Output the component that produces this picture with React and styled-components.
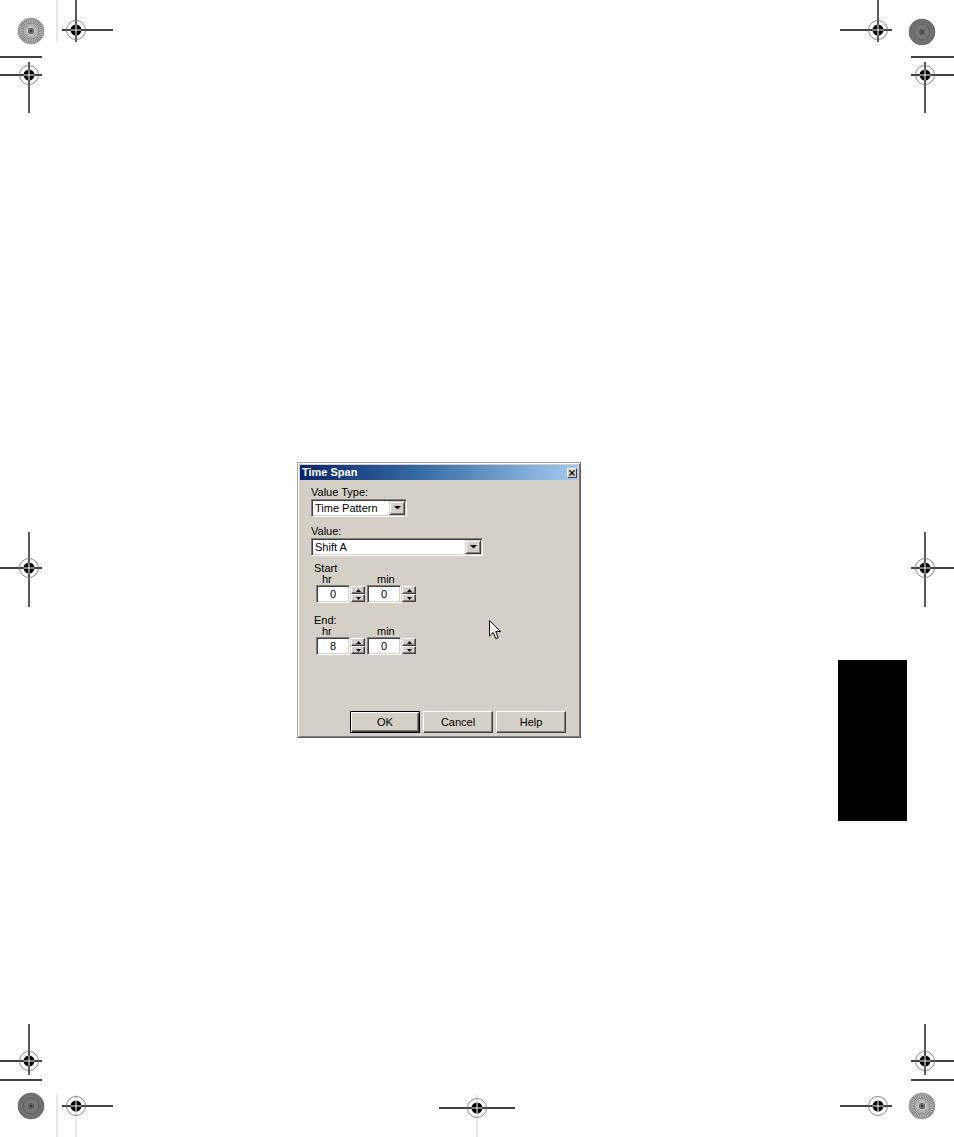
import React from 'react';
import styled, { createGlobalStyle } from 'styled-components';

const Global = createGlobalStyle`
  html, body { margin: 0; padding: 0; background: #fff; }
  body { font-family: "Liberation Sans", Arial, sans-serif; }
`;

const Page = styled.div`
  position: relative;
  width: 954px;
  height: 1137px;
  box-sizing: border-box;
  padding: 462px 0 0 297px;
  overflow: hidden;
  background: #fff;
`;

const Marks = styled.svg`
  position: absolute;
  left: 0;
  top: 0;
  pointer-events: none;
`;

const ThumbTab = styled.div`
  position: absolute;
  left: 838px;
  top: 660px;
  width: 69px;
  height: 161px;
  background: #000;
`;

const Window = styled.div`
  position: relative;
  width: 284px;
  height: 276px;
  box-sizing: border-box;
  display: flex;
  flex-direction: column;
  padding: 2px;
  background: #d4d0c8;
  border: 1px solid;
  border-color: #a8a49c #5a5a5a #5a5a5a #a8a49c;
  box-shadow: inset 1px 1px 0 #fff, inset -1px -1px 0 #808080;
  font-family: "Liberation Sans", Arial, sans-serif;
  font-size: 11px;
  color: #000;
`;

const TitleBar = styled.div`
  height: 15px;
  flex: none;
  display: flex;
  align-items: center;
  justify-content: space-between;
  padding: 0 1px 0 2px;
  background: linear-gradient(to right, #0a246a 0%, #3a6ea5 45%, #a6caf0 100%);
`;

const Title = styled.span`
  color: #fff;
  font-weight: bold;
  font-size: 11px;
  line-height: 15px;
`;

const CloseButton = styled.div`
  width: 10px;
  height: 10px;
  box-sizing: border-box;
  display: flex;
  align-items: center;
  justify-content: center;
  background: #d4d0c8;
  border: 1px solid;
  border-color: #fff #404040 #404040 #fff;
`;

const Body = styled.div`
  flex: 1;
  display: flex;
  flex-direction: column;
  padding: 0 12px 2px 11px;
`;

const Label = styled.div`
  line-height: 12px;
  height: 12px;
  margin-top: ${p => p.$top}px;
  white-space: nowrap;
`;

const Combo = styled.div`
  width: ${p => p.$width}px;
  height: 18px;
  margin-top: 1px;
  box-sizing: border-box;
  display: flex;
  align-items: center;
  background: #fff;
  border: 1px solid;
  border-color: #808080 #fff #fff #808080;
  box-shadow: inset 1px 1px 0 #404040, inset -1px -1px 0 #d4d0c8;
`;

const ComboText = styled.span`
  flex: 1;
  padding-left: 3px;
  line-height: 14px;
  white-space: nowrap;
`;

const DropButton = styled.div`
  width: 16px;
  height: 14px;
  margin-right: 1px;
  box-sizing: border-box;
  display: flex;
  align-items: center;
  justify-content: center;
  background: #d4d0c8;
  border: 1px solid;
  border-color: #d4d0c8 #404040 #404040 #d4d0c8;
  box-shadow: inset 1px 1px 0 #fff, inset -1px -1px 0 #808080;
`;

const TimeGroup = styled.div`
  display: flex;
  flex-direction: column;
  padding-left: 5px;
  margin-top: ${p => p.$top}px;
`;

const GroupTitle = styled.div`
  line-height: 12px;
  height: 12px;
  margin-left: -2px;
`;

const UnitRow = styled.div`
  display: flex;
  gap: 2px;
  height: 10px;
`;

const Unit = styled.div`
  width: 49px;
  line-height: 10px;
  padding-left: ${p => p.$indent}px;
  box-sizing: border-box;
`;

const FieldRow = styled.div`
  display: flex;
  gap: 2px;
  margin-top: 1px;
`;

const SpinField = styled.div`
  display: flex;
`;

const NumberBox = styled.div`
  width: 34px;
  height: 18px;
  box-sizing: border-box;
  background: #fff;
  border: 1px solid;
  border-color: #808080 #fff #fff #808080;
  box-shadow: inset 1px 1px 0 #404040, inset -1px -1px 0 #d4d0c8;
  text-align: center;
  line-height: 16px;
`;

const Spinner = styled.div`
  width: 15px;
  height: 18px;
  padding: 1px 0 1px 1px;
  box-sizing: border-box;
  display: flex;
  flex-direction: column;
`;

const SpinButton = styled.div`
  flex: 1;
  box-sizing: border-box;
  display: flex;
  align-items: center;
  justify-content: center;
  background: #d4d0c8;
  border: 1px solid;
  border-color: #fff #404040 #404040 #fff;
  box-shadow: inset -1px -1px 0 #808080;
`;

const ButtonRow = styled.div`
  margin-top: auto;
  display: flex;
  justify-content: flex-end;
  gap: 3px;
`;

const PushButton = styled.div`
  width: 70px;
  height: 22px;
  box-sizing: border-box;
  display: flex;
  align-items: center;
  justify-content: center;
  background: #d4d0c8;
  border: 1px solid;
  border-color: ${p => (p.$default ? '#000' : '#fff #404040 #404040 #fff')};
  box-shadow: ${p =>
    p.$default
      ? 'inset 1px 1px 0 #fff, inset -1px -1px 0 #404040, inset -2px -2px 0 #808080'
      : 'inset -1px -1px 0 #808080'};
`;

const Cursor = styled.svg`
  position: absolute;
  left: 191px;
  top: 157px;
`;

const Arrow = ({ size = 7 }) => (
  <svg width={size} height={size / 2 + 0.5} viewBox={`0 0 ${size} ${size / 2 + 0.5}`}>
    <polygon points={`0,0 ${size},0 ${size / 2},${size / 2}`} fill="#000" />
  </svg>
);

const TinyArrow = ({ up }) => (
  <svg width="5" height="3" viewBox="0 0 5 3">
    {up ? <polygon points="2.5,0 5,3 0,3" fill="#000" /> : <polygon points="0,0 5,0 2.5,3" fill="#000" />}
  </svg>
);

const Target = ({ x, y }) => (
  <g>
    <circle cx={x} cy={y} r={9.5} fill="none" stroke="#6a6a6a" strokeWidth={0.8} />
    <circle cx={x} cy={y} r={5.5} fill="#000" />
    <line x1={x - 5.5} y1={y} x2={x + 5.5} y2={y} stroke="#fff" strokeWidth={1} />
    <line x1={x} y1={y - 5.5} x2={x} y2={y + 5.5} stroke="#fff" strokeWidth={1} />
  </g>
);

const Starburst = ({ x, y, dark }) => {
  const spokes = [];
  const n = 36;
  for (let i = 0; i < n; i++) {
    const a = (i / n) * Math.PI * 2;
    spokes.push(
      <line
        key={i}
        x1={x + Math.cos(a) * 3}
        y1={y + Math.sin(a) * 3}
        x2={x + Math.cos(a) * 13}
        y2={y + Math.sin(a) * 13}
        stroke={dark ? '#8a8a8a' : '#dcdcdc'}
        strokeWidth={dark ? 0.5 : 0.7}
      />
    );
  }
  return (
    <g>
      <circle cx={x} cy={y} r={13} fill={dark ? '#686868' : '#7c7c7c'} />
      {spokes}
      <circle cx={x} cy={y} r={8} fill="none" stroke={dark ? '#5e5e5e' : '#8a8a8a'} strokeWidth={1} />
      <circle cx={x} cy={y} r={13} fill="none" stroke={dark ? '#5a5a5a' : '#909090'} strokeWidth={0.6} />
      <circle cx={x} cy={y} r={3} fill={dark ? '#5a5a5a' : '#6a6a6a'} />
      <circle cx={x} cy={y} r={1} fill="#333" />
    </g>
  );
};

const blackLines = [
  [76, 0, 76, 42], [62, 30, 113, 30], [0, 57, 42, 57], [0, 75, 42, 75], [29, 62, 29, 113],
  [878, 0, 878, 42], [840, 30, 892, 30], [911, 57, 954, 57], [911, 75, 954, 75], [925, 62, 925, 113],
  [29, 532, 29, 607], [0, 568, 42, 568],
  [925, 532, 925, 607], [911, 568, 954, 568],
  [29, 1024, 29, 1075], [0, 1061, 42, 1061], [0, 1080, 42, 1080], [62, 1106, 113, 1106],
  [439, 1108, 515, 1108],
  [925, 1024, 925, 1075], [911, 1061, 954, 1061], [911, 1080, 954, 1080], [840, 1106, 892, 1106],
];

const greyLines = [
  [57, 0, 57, 42],
  [57, 1095, 57, 1137], [76, 1095, 76, 1137],
  [477, 1095, 477, 1137],
];

const targets = [
  [76, 30], [29, 75], [878, 30], [925, 75],
  [29, 568], [925, 568],
  [29, 1061], [76, 1106], [477, 1108], [925, 1061], [878, 1106],
];

const CropMarks = () => (
  <Marks width="954" height="1137" viewBox="0 0 954 1137">
    {greyLines.map(([a, b, c, d], i) => (
      <line key={`g${i}`} x1={a} y1={b} x2={c} y2={d} stroke="#d0d0d0" strokeWidth={1} />
    ))}
    {blackLines.map(([a, b, c, d], i) => (
      <line key={`b${i}`} x1={a} y1={b} x2={c} y2={d} stroke="#000" strokeWidth={1.3} />
    ))}
    <Starburst x={31} y={31} />
    <Starburst x={922} y={32} dark />
    <Starburst x={31} y={1106} dark />
    <Starburst x={922} y={1106} />
    {targets.map(([x, y], i) => (
      <Target key={`t${i}`} x={x} y={y} />
    ))}
  </Marks>
);

const SpinInput = ({ value }) => (
  <SpinField>
    <NumberBox>{value}</NumberBox>
    <Spinner>
      <SpinButton><TinyArrow up /></SpinButton>
      <SpinButton><TinyArrow /></SpinButton>
    </Spinner>
  </SpinField>
);

const TimeBlock = ({ title, top, hr, min }) => (
  <TimeGroup $top={top}>
    <GroupTitle>{title}</GroupTitle>
    <UnitRow>
      <Unit $indent={6}>hr</Unit>
      <Unit $indent={10}>min</Unit>
    </UnitRow>
    <FieldRow>
      <SpinInput value={hr} />
      <SpinInput value={min} />
    </FieldRow>
  </TimeGroup>
);

export default function App() {
  return (
    <>
      <Global />
      <Page>
        <CropMarks />
        <ThumbTab />
        <Window>
          <TitleBar>
            <Title>Time Span</Title>
            <CloseButton>
              <svg width="6" height="6" viewBox="0 0 6 6">
                <path d="M0.5 0.5 L5.5 5.5 M5.5 0.5 L0.5 5.5" stroke="#000" strokeWidth="1.2" />
              </svg>
            </CloseButton>
          </TitleBar>
          <Body>
            <Label $top={6}>Value Type:</Label>
            <Combo $width={96}>
              <ComboText>Time Pattern</ComboText>
              <DropButton><Arrow /></DropButton>
            </Combo>
            <Label $top={8}>Value:</Label>
            <Combo $width={172}>
              <ComboText>Shift A</ComboText>
              <DropButton><Arrow /></DropButton>
            </Combo>
            <TimeBlock title="Start" top={6} hr="0" min="0" />
            <TimeBlock title="End:" top={11} hr="8" min="0" />
            <ButtonRow>
              <PushButton $default>OK</PushButton>
              <PushButton>Cancel</PushButton>
              <PushButton>Help</PushButton>
            </ButtonRow>
          </Body>
          <Cursor width="13" height="20" viewBox="0 0 13 20">
            <path d="M0.5 0.5 L0.5 16 L4.2 12.4 L6.8 18.6 L9.2 17.6 L6.7 11.6 L11.5 11.6 Z" fill="#fff" stroke="#000" strokeWidth="1" strokeLinejoin="miter" />
          </Cursor>
        </Window>
      </Page>
    </>
  );
}
